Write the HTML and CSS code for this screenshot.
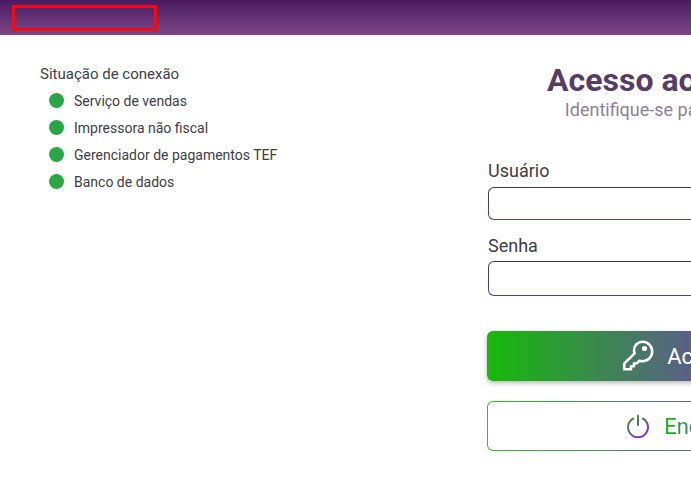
FILE: index.html
```html
<!DOCTYPE html>
<html lang="pt-BR">
<head>
<meta charset="utf-8">
<title>Acesso ao sistema</title>
<link rel="stylesheet" href="styles.css">
</head>
<body>
<header class="topbar"><div class="logo-box"></div></header>
<main class="page">
  <section class="status">
    <h2 class="status-title">Situação de conexão</h2>
    <ul class="status-list">
      <li class="status-item"><span class="dot"></span>Serviço de vendas</li>
      <li class="status-item"><span class="dot"></span>Impressora não fiscal</li>
      <li class="status-item"><span class="dot"></span>Gerenciador de pagamentos TEF</li>
      <li class="status-item"><span class="dot"></span>Banco de dados</li>
    </ul>
  </section>
  <section class="login">
    <h1 class="login-title">Acesso ao sistema</h1>
    <p class="login-sub">Identifique-se para continuar</p>
    <label class="field-label" for="u">Usuário</label>
    <input class="field field-user" id="u" type="text">
    <label class="field-label" for="s">Senha</label>
    <input class="field field-pass" id="s" type="password">
    <button class="btn btn-primary" type="button">
      <svg class="btn-icon" viewBox="0 0 32 32" fill="none" stroke="#fff" stroke-width="2.6" stroke-linejoin="round" stroke-linecap="round">
        <path d="M20.500 1.800c5.400 0 9.700 4.300 9.700 9.700s-4.300 9.700-9.700 9.700c-1.100 0-2.100-.2-3.100-.5l-2.400 2.500h-3v3h-3v3H2.200v-5.500l10.400-10.400c-.4-1-.6-2-.6-3.100 0-4.800 3.700-8.400 8.500-8.400z"/>
        <circle cx="22.500" cy="8.500" r="1.300" fill="#fff"/>
      </svg>
      <span>Acessar</span>
    </button>
    <button class="btn btn-outline" type="button">
      <svg class="btn-icon power" viewBox="0 0 24 24" fill="none" stroke="url(#pw)" stroke-width="2" stroke-linecap="round">
        <defs>
          <linearGradient id="pw" gradientUnits="userSpaceOnUse" x1="1" y1="2" x2="20" y2="22">
            <stop offset="0" stop-color="#2cb40c"/>
            <stop offset="1" stop-color="#8a22f0"/>
          </linearGradient>
        </defs>
        <path d="M7.200 4.500a10 10 0 1 0 9.600 0"/>
        <path d="M12 1.500v9.500"/>
      </svg>
      <span class="btn-outline-text">Encerrar</span>
    </button>
  </section>
</main>
</body>
</html>
```

FILE: styles.css
```css
html, body {
  margin: 0;
  height: 100%;
  overflow: hidden;
  background: #fff;
  font-family: Roboto, "Liberation Sans", sans-serif;
}

.topbar {
  height: 35px;
  box-sizing: border-box;
  padding: 5px 12px 4px;
  background: linear-gradient(180deg, #4a1a60, #7c4788);
}

.logo-box {
  width: 145px;
  height: 26px;
  box-sizing: border-box;
  border: 3px solid #f60a12;
}

.page {
  display: flex;
  width: 882px;
}

.status {
  width: 488px;
  flex: none;
  box-sizing: border-box;
  padding: 30px 0 0 40px;
}

.status-title {
  margin: 0;
  font-size: 15px;
  font-weight: 400;
  line-height: 18px;
  color: #3d3d44;
}

.status-list {
  margin: 4px 0 0;
  padding: 0 0 0 9px;
  list-style: none;
}

.status-item {
  display: flex;
  align-items: center;
  gap: 10px;
  height: 27px;
  font-size: 14px;
  color: #3d3d44;
}

.dot {
  width: 15px;
  height: 15px;
  border-radius: 50%;
  background: #28a745;
}

.login {
  width: 394px;
  flex: none;
  display: flex;
  flex-direction: column;
  padding-top: 26px;
}

.login-title {
  margin: 0;
  padding-right: 4px;
  font-size: 32px;
  font-weight: 700;
  line-height: 38px;
  text-align: center;
  color: #553d66;
}

.login-sub {
  margin: 0;
  padding-right: 12px;
  font-size: 18px;
  line-height: 21px;
  text-align: center;
  color: #8f7f96;
}

.field-label {
  margin-top: 40px;
  font-size: 18px;
  line-height: 21px;
  color: #3d3d44;
}

.field-label + .field + .field-label {
  margin-top: 15px;
}

.field {
  display: block;
  box-sizing: border-box;
  width: 100%;
  margin: 6px 0 0;
  border: 1px solid transparent;
  border-radius: 6px;
  background:
    linear-gradient(#fff, #fff) padding-box,
    linear-gradient(180deg, #3a3a40, #5f3a80) border-box;
  outline: none;
}

.field-user { height: 33px; }
.field-pass { height: 35px; margin-top: 5px; }

.btn {
  display: flex;
  align-items: center;
  justify-content: center;
  gap: 13px;
  width: calc(100% + 1px);
  height: 50px;
  margin-left: -1px;
  box-sizing: border-box;
  border-radius: 6px;
  font-family: inherit;
  font-size: 22px;
}

.btn-primary {
  margin-top: 35px;
  border: 0;
  color: #fff;
  background: linear-gradient(90deg, #15ba0a, #9b0bfd);
  box-shadow: 0 2px 5px rgba(0, 0, 0, .3);
}

.btn-outline {
  margin-top: 20px;
  padding-left: 9px;
  gap: 14px;
  border: 1px solid transparent;
  background:
    linear-gradient(#fff, #fff) padding-box,
    linear-gradient(90deg, #2cc022, #9b0bfd) border-box;
}

.btn-outline-text {
  background: linear-gradient(90deg, #15ba0a, #9b0bfd);
  background-clip: text;
  -webkit-background-clip: text;
  color: transparent;
}

.btn-icon {
  width: 32px;
  height: 32px;
  flex: none;
}

.power {
  width: 24px;
  height: 24px;
}
```
